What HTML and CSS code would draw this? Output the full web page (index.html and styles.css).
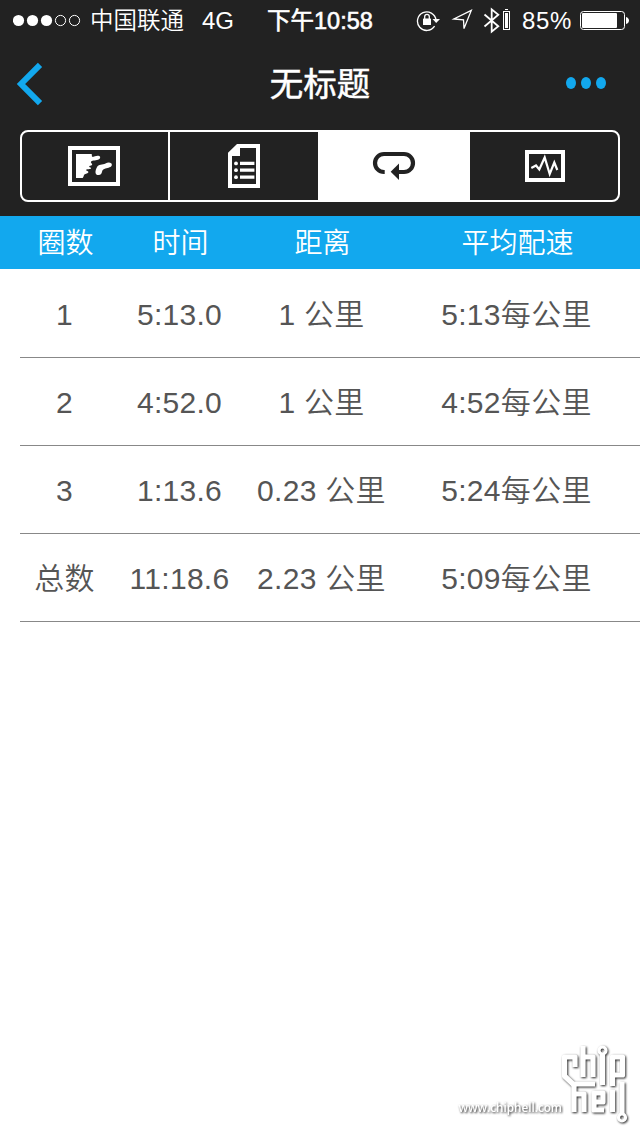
FILE: index.html
```html
<!DOCTYPE html>
<html lang="zh-CN">
<head>
  <meta charset="UTF-8">
  <meta name="viewport" content="width=device-width, initial-scale=1.0">
  <title>无标题</title>
  <link rel="stylesheet" href="styles.css">
</head>
<body>
  <header class="header">
    <div class="status-bar">
      <svg class="signal" width="68" height="14" viewBox="0 0 68 14">
        <g fill="#fff">
          <circle cx="5.5" cy="7.5" r="5.6"/>
          <circle cx="19.5" cy="7.5" r="5.6"/>
          <circle cx="33.5" cy="7.5" r="5.6"/>
        </g>
        <g fill="none" stroke="#fff">
          <circle cx="47.5" cy="7.5" r="5.1"/>
          <circle cx="61.5" cy="7.5" r="5.1"/>
        </g>
      </svg>
      <span class="carrier">中国联通</span>
      <span class="network">4G</span>
      <span class="time">下午10:58</span>
      <svg class="status-icons" width="96" height="28" viewBox="0 0 96 28">
        <!-- rotation lock -->
        <path d="M18.6 20.2A9.3 9.3 0 1 1 20 14" fill="none" stroke="#fff" stroke-width="1.3"/>
        <path d="M16.5 13H24L20.2 17Z" fill="#fff"/>
        <rect x="7" y="12.5" width="8" height="6.5" rx=".6" fill="#fff"/>
        <path d="M8.7 13V10.6a2.3 2.3 0 0 1 4.6 0V13" fill="none" stroke="#fff" stroke-width="1.3"/>
        <!-- location -->
        <path d="M55.3 4.4L37.8 13L47.5 13.8L48 22.6Z" fill="none" stroke="#fff" stroke-width="1.3"/>
        <!-- bluetooth -->
        <path d="M68.5 8.5L82.3 20.2L75.7 25.6V3.4L82.3 8.8L68.5 20.5" fill="none" stroke="#fff" stroke-width="1.8"/>
        <rect x="87.5" y="5.5" width="6" height="18" fill="none" stroke="#fff"/>
        <path d="M89 3h3v1h-3zM89 7h3v15h-3z" fill="#fff"/>
      </svg>
      <span class="percent">85%</span>
      <svg class="battery" width="50" height="20" viewBox="0 0 50 20">
        <rect x=".5" y=".5" width="44" height="18" rx="3" fill="none" stroke="#fff"/>
        <rect x="2" y="2" width="35" height="15" rx="1" fill="#fff"/>
        <path d="M46 6c4 1 4 6 0 7z" fill="#fff"/>
      </svg>
    </div>

    <div class="nav-bar">
      <a class="back" href="#" aria-label="返回">
        <svg width="30" height="44" viewBox="0 0 30 44">
          <path d="M24 2.8L5 22L24 41.2" fill="none" stroke="#12a8ee" stroke-width="6"/>
        </svg>
      </a>
      <h1>无标题</h1>
      <a class="more" href="#" aria-label="更多"><i></i><i></i><i></i></a>
    </div>

    <div class="tabs">
      <a class="tab tab-map" href="#" aria-label="地图">
        <svg width="60" height="48" viewBox="0 0 60 48">
          <rect x="5" y="6" width="48" height="36" fill="none" stroke="#fff" stroke-width="4"/>
          <path d="M11 12H26.7L27 14.8C29 15 31 13.4 33.5 13.8C36 14.3 35.3 16.5 34 17.3C31.5 19 27.5 18 26.2 19.5C25 21 28 21.5 27 23C26 24 24 23.3 24.2 24.5C24.5 25.8 26.5 25.2 26 26.6C25.3 27.8 21 26.4 21 28C21 29 24 28.8 23.3 30.5C22.6 32 19.5 31.8 19 33C18.6 34 18.8 34.5 17.7 36H11Z" fill="#fff"/>
          <path d="M46.5 21.5C44.5 20 42.5 20.5 40.5 21.5C37.5 23 33.5 21.7 31.8 25.5C30.5 28 29.5 32 32.3 32.9C35.5 33.6 36.7 31.8 37 29.8C37.3 27.2 39.5 26.6 42.5 26C45.5 25.2 47.8 24 46.5 21.5Z" fill="#fff"/>
        </svg>
      </a>
      <a class="tab" href="#" aria-label="详情">
        <svg width="60" height="48" viewBox="0 0 60 48">
          <path d="M23 2H46V46H14V10.7ZM26 6V14H18V42H42V6Z" fill="#fff" fill-rule="evenodd"/>
          <g fill="#fff">
            <circle cx="22" cy="21.4" r="1.9"/>
            <circle cx="22" cy="28.2" r="1.9"/>
            <circle cx="22" cy="35.2" r="1.9"/>
          </g>
          <path d="M26 21.4H40.4M26 28.2H40.4M26 35.2H40.4" stroke="#fff" stroke-width="3.2"/>
        </svg>
      </a>
      <a class="tab active" href="#" aria-label="圈数">
        <svg width="60" height="48" viewBox="0 0 60 48">
          <path d="M20.7 30H20A9 9 0 0 1 20 12H40A9 9 0 0 1 40 30H34" fill="none" stroke="#222" stroke-width="4.2"/>
          <path d="M26.7 29.8L35 21.6V38Z" fill="#222"/>
        </svg>
      </a>
      <a class="tab" href="#" aria-label="图表">
        <svg width="60" height="48" viewBox="0 0 60 48">
          <rect x="13" y="10" width="36" height="28" fill="none" stroke="#fff" stroke-width="4"/>
          <path d="M17.3 26L22 23.5L25.3 27.5L30.7 15.5L35.7 32L40.3 20.5L43.3 28" fill="none" stroke="#fff" stroke-width="2.2"/>
        </svg>
      </a>
    </div>
  </header>

  <main class="laps">
    <div class="lap-head">
      <span>圈数</span><span>时间</span><span>距离</span><span>平均配速</span>
    </div>
    <div class="lap-row">
      <span>1</span><span>5:13.0</span><span>1 公里</span><span>5:13每公里</span>
    </div>
    <div class="lap-row">
      <span>2</span><span>4:52.0</span><span>1 公里</span><span>4:52每公里</span>
    </div>
    <div class="lap-row">
      <span>3</span><span>1:13.6</span><span>0.23 公里</span><span>5:24每公里</span>
    </div>
    <div class="lap-row">
      <span>总数</span><span>11:18.6</span><span>2.23 公里</span><span>5:09每公里</span>
    </div>
  </main>

  <div class="watermark">
    <span>www.chiphell.com</span>
    <svg width="80" height="90" viewBox="0 0 80 90">
      <g fill="none" stroke="#fff" stroke-width="5.2" stroke-linejoin="round">
        <path d="M20 31V21H9.5V40L18 48H40"/>
        <path d="M28 10V41M28 21H38V41"/>
        <path d="M47.5 18V49"/>
        <circle cx="47.5" cy="14.5" r="3.5" stroke-width="3.2"/>
        <path d="M57.5 50V21H67.5V39H58"/>
        <path d="M19 48V76M19 58H29V76"/>
        <path d="M49 74H39V57H48V66H39"/>
        <path d="M57.5 54V76"/>
        <path d="M67 46V78"/>
        <circle cx="67" cy="81.5" r="3.5" stroke-width="3.2"/>
      </g>
    </svg>
  </div>
</body>
</html>
```
FILE: styles.css
```css
* {
  box-sizing: border-box;
}
body {
  margin: 0;
  min-height: 1136px;
  position: relative;
  background-color: #fff;
  font-family: "Liberation Sans", "Noto Sans CJK SC", sans-serif;
  color: #555;
}
a {
  text-decoration: none;
}
svg {
  display: block;
  flex: none;
}
.header {
  height: 216px;
  background-color: #222;
  color: #fff;
}

/* status bar */
.status-bar {
  display: flex;
  align-items: center;
  height: 40px;
  padding-left: 13px;
  font-size: 24px;
  line-height: 40px;
  white-space: nowrap;
}
.status-bar span {
  flex: none;
  padding-top: 2px;
}
.carrier {
  width: 95px;
  margin-left: 9px;
  font-size: 23.5px;
  font-weight: 350;
}
.network {
  width: 40px;
  margin-left: 17px;
}
.time {
  width: 110px;
  margin-left: 25px;
  font-size: 23.5px;
  -webkit-text-stroke: 0.6px #fff;
}
.status-icons {
  margin-left: 39px;
}
.percent {
  width: 58px;
  margin-left: 10px;
  letter-spacing: 0.7px;
}
.battery {
  margin-top: 1px;
}

/* navigation */
.nav-bar {
  display: flex;
  align-items: center;
  justify-content: space-between;
  height: 88px;
  padding: 0 34px 0 16px;
}
.back {
  width: 60px;
}
.nav-bar h1 {
  margin: 0 0 5px;
  font-size: 33.5px;
  font-weight: 400;
  -webkit-text-stroke: 0.5px #fff;
}
.more {
  display: flex;
  justify-content: flex-end;
  gap: 5px;
  width: 42px;
  padding-bottom: 2px;
}
.more i {
  width: 10px;
  height: 12px;
  border-radius: 50%;
  background-color: #12a8ee;
}

/* segmented tabs */
.tabs {
  display: flex;
  height: 72px;
  margin: 2px 20px 0;
  border: 2px solid #fff;
  border-radius: 8px;
}
.tab {
  display: flex;
  align-items: center;
  justify-content: center;
  width: 148px;
}
.tab-map {
  border-right: 2px solid #fff;
}
.tab.active {
  width: 152px;
  background-color: #fff;
}

/* lap table */
.lap-head,
.lap-row {
  display: grid;
  grid-template-columns: 89px 141px 143px 247px;
  align-items: center;
  margin-left: 20px;
  text-align: center;
  white-space: nowrap;
  line-height: 36px;
}
.lap-head {
  height: 53px;
  margin-left: 0;
  padding: 3px 0 0 21px;
  background-color: #12a8ee;
  color: #fff;
  font-size: 28px;
  font-weight: 350;
}
.lap-row {
  height: 88px;
  padding-top: 3px;
  border-bottom: 1px solid #888;
  font-size: 30px;
  font-weight: 350;
  letter-spacing: 0.3px;
}
.lap-head + .lap-row {
  height: 89px;
}

/* watermark */
.watermark {
  position: absolute;
  right: 5px;
  bottom: 10px;
  display: flex;
  align-items: flex-end;
  filter: drop-shadow(1px 1px 1px rgba(0, 0, 0, 0.85));
}
.watermark span {
  margin: 0 -7px 9px 0;
  color: #fff;
  font-family: "Open Sans", sans-serif;
  font-size: 11.7px;
  font-weight: 600;
  line-height: 20px;
}
```
